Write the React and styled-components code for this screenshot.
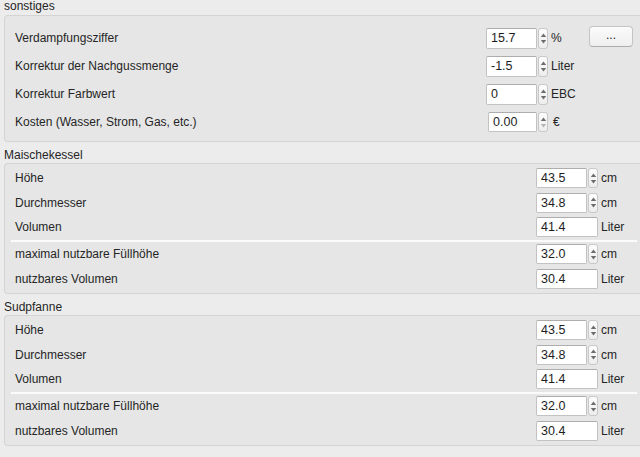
import React from "react";
import styled, { createGlobalStyle } from "styled-components";

const Global = createGlobalStyle`
  html, body { margin: 0; padding: 0; background: #ececec; }
  body {
    font-family: "Liberation Sans", Arial, sans-serif;
    font-size: 12px;
    color: #252525;
    width: 640px;
    height: 457px;
    overflow: hidden;
  }
`;

const Page = styled.div`
  display: flex;
  flex-direction: column;
  width: 640px;
`;

const Title = styled.div`
  padding: ${(p) => (p.$first ? "0" : "6px")} 0 0 4px;
  height: 15px;
  line-height: ${(p) => (p.$first ? "13px" : "14px")};
`;

const Group = styled.div`
  margin-left: 4px;
  border: 1px solid #d4d4d4;
  border-right: none;
  border-radius: 4px 0 0 4px;
  background: #e6e6e6;
  padding: ${(p) => p.$pad};
`;

const TopRow = styled.div`
  display: grid;
  grid-template-columns: 1fr 62px 41px 44px;
  align-items: center;
  height: 28px;
  padding: 0 7px 0 10px;
`;

const Row = styled.div`
  display: grid;
  grid-template-columns: 1fr 62px 42px;
  align-items: center;
  height: 24.6px;
  padding: 0 0 0 10px;
`;

const Label = styled.span`
  white-space: nowrap;
`;

const Unit = styled.span`
  padding-left: ${(p) => (p.$pad ? p.$pad : "3px")};
`;

const Field = styled.div`
  display: flex;
  align-items: center;
  height: ${(p) => p.$h || 21}px;
  box-sizing: border-box;
  margin-left: ${(p) => (p.$shift ? p.$shift : "0")};
`;

const Input = styled.div`
  flex: 1;
  height: 100%;
  box-sizing: border-box;
  background: #fff;
  border: 1px solid #c2c2c2;
  border-top-color: #adadad;
  border-radius: 2px;
  padding-left: 4px;
  display: flex;
  align-items: center;
  font-size: 12.5px;
  color: #1e1e1e;
`;

const Spin = styled.div`
  width: 10px;
  height: 100%;
  margin-left: 1px;
  box-sizing: border-box;
  border: 1px solid #c8c8c8;
  border-radius: 3px;
  background: linear-gradient(#fdfdfd, #ededed);
  display: flex;
  align-items: center;
  justify-content: center;
`;

const Button = styled.div`
  height: 21px;
  margin-bottom: 4px;
  box-sizing: border-box;
  border: 1px solid #c4c4c4;
  border-bottom-color: #acacac;
  border-radius: 4px;
  background: linear-gradient(#fbfbfb, #efefef);
  display: flex;
  align-items: center;
  justify-content: center;
  font-size: 12px;
  padding-bottom: 2px;
`;

const Separator = styled.div`
  height: 2px;
  background: #fbfbfb;
  margin: 0 3px 0 6px;
`;

function Arrows({ dim }) {
  return (
    <svg width="7" height="13" viewBox="0 0 7 13">
      <path d="M3.5 1.5 L6.2 5 L0.8 5 Z" fill="#6c6c6c" />
      <path d="M3.5 11.5 L6.2 8 L0.8 8 Z" fill={dim ? "#b5b5b5" : "#6c6c6c"} />
    </svg>
  );
}

function SpinBox({ value, spin = true, dim, shift, h }) {
  return (
    <Field $shift={shift} $h={h}>
      <Input>{value}</Input>
      {spin && (
        <Spin>
          <Arrows dim={dim} />
        </Spin>
      )}
    </Field>
  );
}

function Vessel({ title, pad }) {
  return (
    <>
      <Title>{title}</Title>
      <Group $pad={pad}>
        <Row>
          <Label>Höhe</Label>
          <SpinBox value="43.5" h={20} />
          <Unit>cm</Unit>
        </Row>
        <Row>
          <Label>Durchmesser</Label>
          <SpinBox value="34.8" h={20} />
          <Unit>cm</Unit>
        </Row>
        <Row>
          <Label>Volumen</Label>
          <Field $h={20}>
            <Input>41.4</Input>
          </Field>
          <Unit>Liter</Unit>
        </Row>
        <Separator />
        <Row>
          <Label>maximal nutzbare Füllhöhe</Label>
          <SpinBox value="32.0" h={20} />
          <Unit>cm</Unit>
        </Row>
        <Row>
          <Label>nutzbares Volumen</Label>
          <Field $h={20}>
            <Input>30.4</Input>
          </Field>
          <Unit>Liter</Unit>
        </Row>
      </Group>
    </>
  );
}

export default function App() {
  return (
    <Page>
      <Global />
      <Title $first>sonstiges</Title>
      <Group $pad="8px 0 5px 0">
        <TopRow>
          <Label>Verdampfungsziffer</Label>
          <SpinBox value="15.7" />
          <Unit>%</Unit>
          <Button>...</Button>
        </TopRow>
        <TopRow>
          <Label>Korrektur der Nachgussmenge</Label>
          <SpinBox value="-1.5" />
          <Unit>Liter</Unit>
          <span />
        </TopRow>
        <TopRow>
          <Label>Korrektur Farbwert</Label>
          <SpinBox value="0" />
          <Unit>EBC</Unit>
          <span />
        </TopRow>
        <TopRow>
          <Label>Kosten (Wasser, Strom, Gas, etc.)</Label>
          <SpinBox value="0.00" dim shift="2px" h={20} />
          <Unit $pad="5px">€</Unit>
          <span />
        </TopRow>
      </Group>
      <Vessel title="Maischekessel" pad="2px 0 2px 0" />
      <Vessel title="Sudpfanne" pad="2px 0 2px 0" />
    </Page>
  );
}
